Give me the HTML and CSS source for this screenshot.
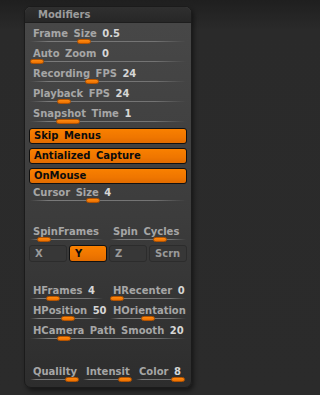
FILE: index.html
```html
<!DOCTYPE html>
<html>
<head>
<meta charset="utf-8">
<link rel="stylesheet" href="styles.css">
</head>
<body>
<div class="panel">
  <div class="header">Modifiers</div>
  <div class="content">
    <div class="slider"><span class="lbl">Frame Size <b>0.5</b></span><i class="knob" style="left:47px"></i></div>
    <div class="slider"><span class="lbl">Auto Zoom <b>0</b></span><i class="knob" style="left:0px"></i></div>
    <div class="slider"><span class="lbl">Recording FPS <b>24</b></span><i class="knob" style="left:55px"></i></div>
    <div class="slider"><span class="lbl">Playback FPS <b>24</b></span><i class="knob" style="left:27px"></i></div>
    <div class="slider"><span class="lbl">Snapshot Time <b>1</b></span><i class="knob wide" style="left:26px"></i></div>

    <div class="toggles">
      <div class="btn on">Skip Menus</div>
      <div class="btn on">Antialized Capture</div>
      <div class="btn on">OnMouse</div>
    </div>

    <div class="slider tight"><span class="lbl">Cursor Size <b>4</b></span><i class="knob" style="left:56px"></i></div>

    <div class="cols2 spin">
      <div class="slider"><span class="lbl">SpinFrames</span><i class="knob" style="left:7px"></i></div>
      <div class="slider"><span class="lbl">Spin Cycles</span><i class="knob" style="left:43px"></i></div>
    </div>
    <div class="axes">
      <div class="btn">X</div>
      <div class="btn on">Y</div>
      <div class="btn">Z</div>
      <div class="btn">Scrn</div>
    </div>

    <div class="cols2 hgroup">
      <div class="slider"><span class="lbl">HFrames <b>4</b></span><i class="knob" style="left:16px"></i></div>
      <div class="slider"><span class="lbl">HRecenter <b>0</b></span><i class="knob" style="left:0px"></i></div>
    </div>
    <div class="cols2">
      <div class="slider"><span class="lbl">HPosition <b>50</b></span><i class="knob" style="left:31px"></i></div>
      <div class="slider"><span class="lbl">HOrientation</span><i class="knob" style="left:31px"></i></div>
    </div>
    <div class="slider"><span class="lbl">HCamera Path Smooth <b>20</b></span><i class="knob" style="left:27px"></i></div>

    <div class="cols3">
      <div class="slider"><span class="lbl">Qualilty</span><i class="knob" style="left:35px"></i></div>
      <div class="slider"><span class="lbl">Intensit</span><i class="knob" style="left:35px"></i></div>
      <div class="slider"><span class="lbl">Color <b>8</b></span><i class="knob" style="left:35px"></i></div>
    </div>
  </div>
</div>
</body>
</html>
```

FILE: styles.css
```css
html, body {
  margin: 0;
  padding: 0;
}
body {
  width: 216px;
  height: 395px;
  overflow: hidden;
  background: linear-gradient(#1f1f1f, #2a2a2a 30px, #2b2b2b);
  font-family: "DejaVu Sans", Verdana, sans-serif;
  font-weight: bold;
  font-size: 10px;
  color: #a6a6a6;
}
.panel {
  margin: 6px 0 0 24px;
  width: 168px;
  height: 382px;
  box-sizing: border-box;
  border: 1px solid #1b1b1b;
  border-radius: 7px;
  overflow: hidden;
  background: linear-gradient(#484848, #3c3c3c 55%, #2d2d2d);
  box-shadow: 2px 3px 4px rgba(0, 0, 0, 0.45);
  display: flex;
  flex-direction: column;
}
.header {
  height: 15px;
  line-height: 15px;
  padding-left: 13px;
  background: linear-gradient(#2f2f2f, #272727);
  border-bottom: 1px solid #1e1e1e;
  color: #9c9c9c;
  word-spacing: 2px;
}
.content {
  padding: 0 5px;
  display: flex;
  flex-direction: column;
}
.slider {
  position: relative;
  height: 20px;
  background: linear-gradient(to right, rgba(120,120,120,0), #7a7a7a 12%, #737373 80%, rgba(120,120,120,0)) no-repeat 0 18px / 100% 1px;
}
.lbl {
  display: block;
  padding: 5px 0 0 3px;
  line-height: 12px;
  white-space: nowrap;
  word-spacing: 2px;
}
.lbl b {
  color: #d6d6d6;
}
.knob {
  position: absolute;
  top: 16px;
  width: 14px;
  height: 5px;
  box-sizing: border-box;
  border-radius: 3px;
  background: linear-gradient(#ff8a10, #ec7000);
  border: 1px solid #b35300;
}
.knob.wide {
  width: 24px;
}
.toggles {
  display: flex;
  flex-direction: column;
  gap: 4px;
  margin: 5px -1px 0;
}
.btn {
  height: 16px;
  line-height: 14px;
  box-sizing: border-box;
  border-radius: 3px;
  padding-left: 4px;
  white-space: nowrap;
  word-spacing: 2px;
}
.btn.on {
  background: linear-gradient(#f98000, #ef7600 60%, #e26c00);
  border: 1px solid #111;
  color: #0c0c0c;
}
.slider.tight .lbl {
  padding-top: 3px;
}
.slider.tight {
  height: 18px;
  background-position: 0 16px;
}
.slider.tight .knob {
  top: 14px;
}
.cols2 {
  display: grid;
  grid-template-columns: 73px 76px;
  column-gap: 7px;
}
.cols2.spin {
  margin-top: 19px;
}
.cols3 {
  display: grid;
  grid-template-columns: 50px 50px 50px;
  column-gap: 3px;
  margin-top: 21px;
}
.axes {
  display: grid;
  grid-template-columns: repeat(4, 38px);
  column-gap: 2px;
  margin: 4px -1px 0;
}
.axes .btn {
  height: 17px;
  line-height: 15px;
  padding-left: 5px;
  background: #373737;
  border: 1px solid #2c2c2c;
  color: #9a9a9a;
}
.axes .btn.on {
  background: linear-gradient(#f98000, #ef7600 60%, #e26c00);
  border: 1px solid #111;
  color: #0c0c0c;
}
.cols2.hgroup {
  margin-top: 18px;
}
```
